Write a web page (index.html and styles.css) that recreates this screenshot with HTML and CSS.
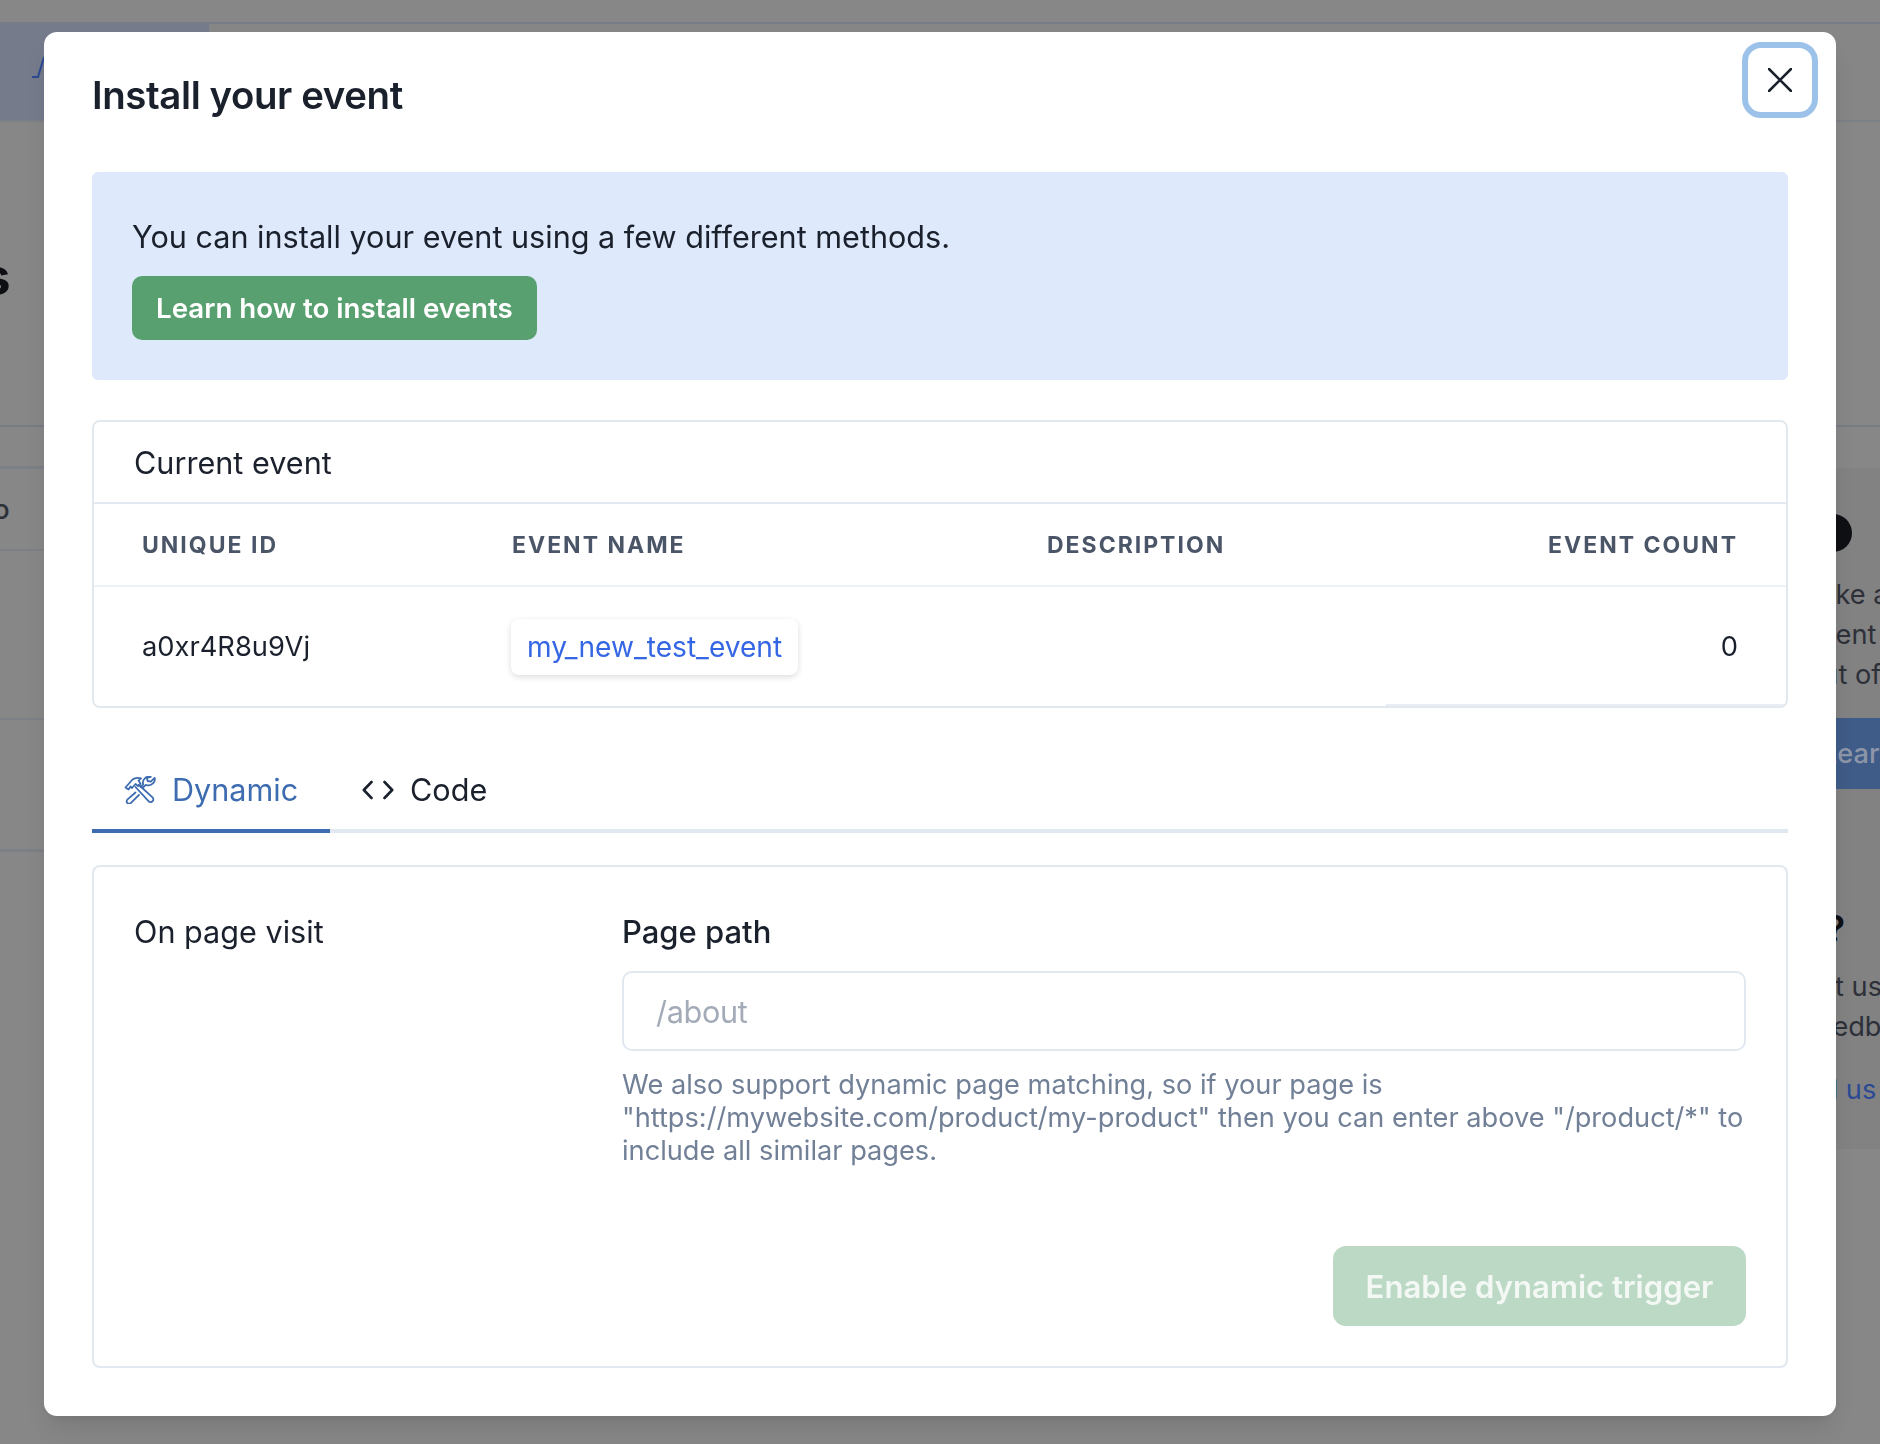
FILE: index.html
```html
<!DOCTYPE html>
<html lang="en">
<head>
<meta charset="utf-8">
<title>Install your event</title>
<link rel="stylesheet" href="styles.css">
</head>
<body>
<div class="page">
  <div class="topbar"></div>
  <nav class="navrow">
    <div class="brand"><svg class="brand-mark" viewBox="0 0 14 22" width="14" height="22"><path d="M0 21h6L12 1" fill="none" stroke="#2a4a94" stroke-width="2"/></svg></div>
  </nav>
  <div class="content">
    <main class="main">
      <h1 class="page-title">Events</h1>
      <div class="tabrow"></div>
      <div class="rowline rowtabs"></div>
      <div class="rowline rowhead"><span>Info</span></div>
      <div class="rowline rowmid"></div>
      <div class="rowline rowlast"></div>
    </main>
    <aside class="side">
      <div class="side-top"></div>
      <div class="side-card">
        <div class="side-dot"></div>
        <p class="side-text side-first">To make a</p>
        <p class="side-text">the event</p>
        <p class="side-text">get out of</p>
      </div>
      <div class="side-cta">Learn</div>
      <div class="side-card-b">
        <div class="side-q">Ask?</div>
        <p class="side-text">and let us</p>
        <p class="side-text">our feedback</p>
        <p class="side-link">Do tell us</p>
      </div>
    </aside>
  </div>
</div>

<div class="overlay">
  <section class="modal" role="dialog" aria-label="Install your event">
    <button class="close" aria-label="Close">
      <svg viewBox="0 0 24 24" width="24" height="24"><path d="M1 1l22 22M23 1L1 23" fill="none" stroke="#1a202c" stroke-width="2.6" stroke-linecap="round"/></svg>
    </button>
    <h2 class="modal-title">Install your event</h2>

    <div class="alert">
      <p class="alert-text">You can install your event using a few different methods.</p>
      <a class="btn-learn">Learn how to install events</a>
    </div>

    <div class="card">
      <div class="card-head">Current event</div>
      <table class="events">
        <colgroup><col class="c1"><col class="c2"><col class="c3"><col class="c4"></colgroup>
        <thead>
          <tr><th>Unique ID</th><th>Event name</th><th>Description</th><th class="num">Event count</th></tr>
        </thead>
        <tbody>
          <tr>
            <td>a0xr4R8u9Vj</td>
            <td><a class="event-tag">my_new_test_event</a></td>
            <td></td>
            <td class="num">0</td>
          </tr>
        </tbody>
      </table>
    </div>

    <div class="tabs">
      <div class="tab tab-active">
        <svg class="tab-icon" viewBox="0 0 32 28" width="32" height="28" fill="none" stroke="currentColor" stroke-width="1.8" stroke-linejoin="round" stroke-linecap="round">
          <path d="M1.5 11.5 8.5 3.5C11 1.6 14 1.4 17 2.4L14.5 4.6 16.5 7.5 14 10 11.5 8 8 12 6.5 10.5 4.5 13.5Z"/>
          <path d="M11.5 11 24.5 25.2C25.6 26.4 27.6 26.4 28.6 25.2 29.7 24 29.6 22.4 28.5 21.4L15 9"/>
          <path d="M18.5 12 21.8 8.8C24.4 9.8 27.4 9.2 29.2 7.2 30.7 5.6 31.1 3.5 30.6 1.8L26.8 5.6 23.6 5 23 1.8 26.8 0.9C24.8 0.3 22.2 0.8 20.6 2.6 19 4.3 18.5 6.4 19.2 8.4L16.6 11"/>
          <path d="M11.5 16.5 3.6 23.4C2.4 24.5 2.3 26 3.4 27 4.5 27.9 6 27.9 7 26.9L15 18.8"/>
        </svg>
        <span>Dynamic</span>
      </div>
      <div class="tab">
        <svg class="tab-icon" viewBox="0 0 32 20" width="32" height="20" fill="none" stroke="#1a202c" stroke-width="2.6" stroke-linecap="round" stroke-linejoin="round"><path d="M9.5 2 1.8 10l7.7 8M22.5 2l7.7 8-7.7 8"/></svg>
        <span>Code</span>
      </div>
    </div>

    <div class="panel">
      <div class="panel-label">On page visit</div>
      <div class="panel-form">
        <label class="field-label">Page path</label>
        <input class="field-input" placeholder="/about">
        <p class="field-help">We also support dynamic page matching, so if your page is "https://mywebsite.com/product/my-product" then you can enter above "/product/*" to include all similar pages.</p>
        <div class="form-actions"><button class="btn-enable" disabled>Enable dynamic trigger</button></div>
      </div>
    </div>
  </section>
</div>
</body>
</html>
```

FILE: styles.css
```css
* { box-sizing: border-box; }
html, body { margin: 0; height: 1444px; overflow: hidden; }
body { font-family: Inter, "Liberation Sans", sans-serif; color: #1a202c; background: #878787; }
p, h1, h2 { margin: 0; }

/* dimmed page behind the dialog */
.page { height: 1444px; overflow: hidden; display: flex; flex-direction: column; }
.topbar { height: 24px; flex: none; background: #878787; border-bottom: 2px solid #767d88; }
.navrow { height: 98px; flex: none; border-bottom: 2px solid #7b7f86; background: #868686; }
.brand { width: 209px; height: 100%; background: #757b8b; padding: 32px 0 0 32px; }
.brand-mark { display: block; }
.content { flex: 1; display: flex; min-height: 0; }
.main { flex: 1; min-width: 0; padding-top: 125px; }
.page-title { font-size: 51px; line-height: 60px; font-weight: 700; color: #0e0f12; margin-left: -159px; white-space: nowrap; }
.tabrow { height: 120px; border-bottom: 2px solid #777c85; }
.rowline { border-bottom: 2px solid #7c7f85; }
.rowtabs { height: 42px; border-bottom-width: 3px; }
.rowhead { height: 82px; font-size: 27.2px; font-weight: 500; color: #2c3038; line-height: 82px; }
.rowhead span { display: block; margin-left: -40px; }
.rowmid { height: 169px; }
.rowlast { height: 132px; border-bottom-width: 3px; }
.side { width: 192px; flex: none; }
.side-top { height: 305px; border-bottom: 2px solid #777c85; }
.side-card { margin-top: 41px; height: 250px; background: #828282; padding: 46px 0 0 69px; }
.side-dot { width: 38px; height: 38px; border-radius: 50%; background: #0e1013; margin-left: 57px; }
.side-text { font-size: 27.2px; line-height: 40px; color: #2d3038; white-space: nowrap; }
.side-first { margin-top: 23px; }
.side-cta { height: 71px; background: #3f5b87; color: #8d96a8; font-size: 27.2px; font-weight: 500; line-height: 71px; padding-left: 134px; white-space: nowrap; }
.side-card-b { height: 360px; background: #828282; padding: 120px 0 0 69px; }
.side-q { font-size: 37px; font-weight: 600; color: #0e1013; line-height: 40px; margin-bottom: 18px; white-space: nowrap; }
.side-link { font-size: 27.2px; line-height: 40px; color: #2a4a94; margin-top: 23px; white-space: nowrap; }

/* dialog */
.overlay { position: fixed; inset: 0; padding: 32px 44px 28px; }
.modal { position: relative; background: #fff; border-radius: 13px; height: 1384px; padding: 48px; box-shadow: 0 16px 24px -5px rgba(0,0,0,.1), 0 6px 10px -3px rgba(0,0,0,.05); }
.close { position: absolute; top: 10px; right: 18px; width: 76px; height: 76px; display: flex; align-items: center; justify-content: center; border: 6px solid #9cc2ea; border-radius: 19px; background: #fff; padding: 0; }
.modal-title { font-size: 38.4px; line-height: 58px; font-weight: 600; letter-spacing: -.4px; margin-top: -14px; }
.alert { margin-top: 48px; height: 208px; background: #deE9fb; border-radius: 6px; padding: 40px; }
.alert-text { font-size: 30.6px; line-height: 50px; }
.btn-learn { display: inline-block; height: 64px; line-height: 64px; margin-top: 14px; padding: 0 24px; background: #58a070; color: #fff; border-radius: 10px; font-size: 27.7px; font-weight: 600; }

.card { margin-top: 40px; border: 2px solid #e2e8f0; border-radius: 8px; height: 288px; overflow: hidden; }
.card-head { height: 82px; border-bottom: 2px solid #e2e8f0; padding-left: 40px; font-size: 30.6px; line-height: 81px; }
.events { width: 100%; border-collapse: collapse; table-layout: fixed; }
.c1 { width: 370px; }
.c2 { width: 535px; }
.c3 { width: 387px; }
.events th { height: 82px; padding: 0 48px; text-align: left; font-size: 23px; font-weight: 700; letter-spacing: 2px; text-transform: uppercase; color: #4a5568; border-bottom: 2px solid #edf2f7; }
.events td { height: 120px; padding: 0 48px; font-size: 27.3px; }
.events .num { text-align: right; }
.events td.num { box-shadow: inset 0 -2px 0 #e9eef5; }
.event-tag { display: inline-block; height: 56px; line-height: 56px; padding: 0 16px; font-size: 28.1px; color: #3566e4; border-radius: 8px; background: #fff; box-shadow: 0 2px 6px rgba(0,0,0,.14); margin-left: -1px; }

.tabs { margin-top: 32px; height: 93px; display: flex; border-bottom: 4px solid #e2e8f0; }
.tab { height: 93px; padding: 10px 32px 0; display: flex; align-items: center; gap: 16px; font-size: 30.6px; border-bottom: 4px solid transparent; }
.tab-active { width: 238px; color: #3e6cb0; border-bottom-color: #3e6cb0; }
.tab-icon { flex: none; }

.panel { margin-top: 32px; height: 503px; border: 2px solid #e2e8f0; border-radius: 8px; padding: 41px 40px 40px; display: flex; }
.panel-label { width: 488px; flex: none; font-size: 30.6px; line-height: 48px; }
.panel-form { flex: 1; min-width: 0; }
.field-label { display: block; font-size: 31px; font-weight: 500; line-height: 48px; }
.field-input { display: block; width: 100%; height: 80px; margin-top: 15px; border: 2px solid #e2e8f0; border-radius: 10px; padding: 0 32px; font: 400 30.6px Inter, sans-serif; letter-spacing: -.3px; color: #1a202c; outline: none; background: #fff; }
.field-input::placeholder { color: #a3abb8; opacity: 1; }
.field-help { margin-top: 17px; font-size: 27.2px; line-height: 33px; color: #718096; }
.form-actions { display: flex; justify-content: flex-end; margin-top: 79px; }
.btn-enable { height: 80px; width: 413px; border: 0; border-radius: 13px; padding: 2px 0 0; background: #bcd9c5; color: #f3f8f5; font: 600 31.1px Inter, sans-serif; }
```
